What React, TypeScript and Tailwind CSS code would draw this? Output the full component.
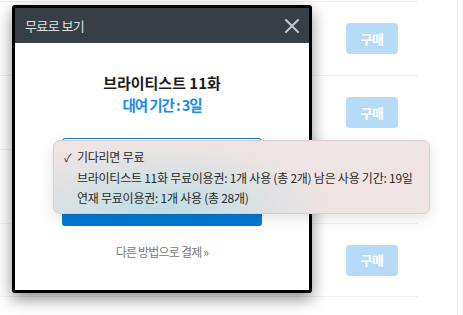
import React, { JSX } from "react";

const font = { fontFamily: '"Noto Sans CJK KR", "Noto Sans", sans-serif' };

function BuyRow({ last }: { last?: boolean }): JSX.Element {
  return (
    <div
      className={`h-[74px] border-t border-[#eef0f4] flex items-center justify-end pr-[20px] ${
        last ? "border-b" : ""
      }`}
    >
      <button className="w-[52px] h-[31px] rounded-[4px] bg-[#b6dbf7] text-white text-[13px] font-bold tracking-[-0.5px]">
        구매
      </button>
    </div>
  );
}

function CloseIcon(): JSX.Element {
  return (
    <svg width="14" height="14" viewBox="0 0 14 14" fill="none">
      <path
        d="M1 1L13 13M13 1L1 13"
        stroke="#c3c7cc"
        strokeWidth="2"
        strokeLinecap="square"
      />
    </svg>
  );
}

export default function App(): JSX.Element {
  return (
    <div
      className="relative w-[463px] h-[315px] bg-white overflow-hidden"
      style={font}
    >
      {/* list behind */}
      <div className="flex">
        <div className="w-[418px] pt-[1px]">
          <BuyRow />
          <BuyRow />
          <BuyRow />
          <BuyRow last />
        </div>
        <div className="ml-[39px] w-px h-[315px] bg-[#f1f2f4]" />
      </div>

      {/* modal */}
      <div className="absolute left-[12px] top-[5px] w-[300px] h-[288px] border-[3px] border-black rounded-[3px] bg-white shadow-[0_6px_16px_rgba(0,0,0,0.45)] flex flex-col">
        <div className="h-[35px] bg-[#373e46] flex items-center justify-between pl-[10px] pr-[10px]">
          <span className="text-[13px] text-[#dde0e4] tracking-[-0.6px]">
            무료로 보기
          </span>
          <CloseIcon />
        </div>
        <div className="flex flex-col items-center pt-[30px]">
          <div className="text-[15px] leading-[20px] font-bold text-[#1b1b1b] tracking-[0px]">
            브라이티스트 11화
          </div>
          <div className="mt-[2px] text-[14.5px] leading-[20px] font-bold text-[#1a8de6] tracking-[-1.1px]">
            대여 기간 : 3일
          </div>
          <div className="mt-[23px] w-[200px] flex flex-col gap-[8px]">
            <div className="h-[40px] rounded-[3px] border border-[#1a7fd6] bg-white" />
            <div className="h-[40px] rounded-[3px] bg-[#0079d3]" />
          </div>
          <div className="mt-[17px] text-[12px] leading-[18px] text-[#777b80] tracking-[-0.8px]">
            다른 방법으로 결제 »
          </div>
        </div>
      </div>

      {/* tooltip */}
      <div className="absolute left-[53px] top-[140px] w-[377px] h-[74px] rounded-[7px] border border-[#d6d0d0] bg-[#efe4e4] bg-[image:radial-gradient(ellipse_170px_70px_at_28%_100%,#bcdde3_0%,rgba(239,228,228,0)_100%)] shadow-[0_4px_14px_rgba(0,0,0,0.12)] pl-[10px] pt-[6px] text-[12px] leading-[20.5px] text-[#2a2a2a] tracking-[-0.25px]">
        <div className="flex">
          <span className="w-[13px] text-[11px]">✓</span>
          <span>기다리면 무료</span>
        </div>
        <div className="pl-[13px]">
          브라이티스트 11화 무료이용권: 1개 사용 (총 2개) 남은 사용 기간: 19일
        </div>
        <div className="pl-[13px]">연재 무료이용권: 1개 사용 (총 28개)</div>
      </div>
    </div>
  );
}
